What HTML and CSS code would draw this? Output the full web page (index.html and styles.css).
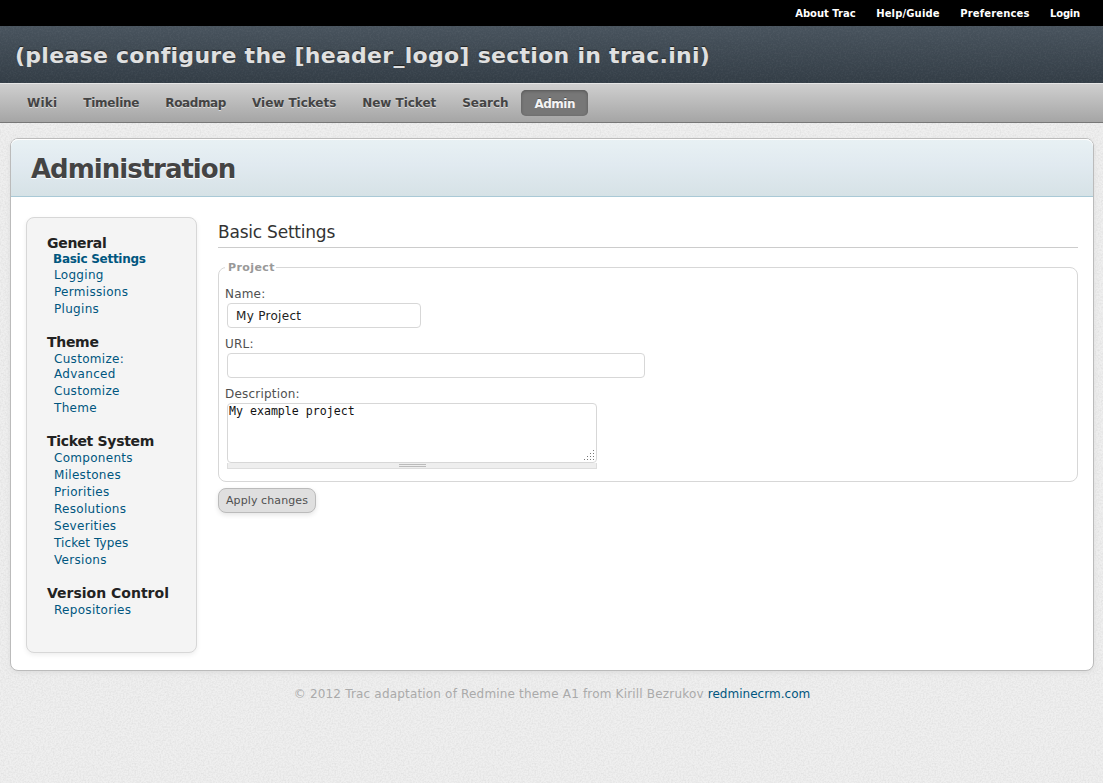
FILE: index.html
```html
<!DOCTYPE html>
<html lang="en">
<head>
<meta charset="utf-8">
<title>Administration: Basic Settings</title>
<link rel="stylesheet" href="styles.css">
</head>
<body>
<nav class="metanav">
  <a class="about">About Trac</a><a class="help">Help/Guide</a><a class="prefs">Preferences</a><a class="login">Login</a>
</nav>
<header class="banner"><span class="logo">(please configure the [header_logo] section in trac.ini)</span></header>
<nav class="mainnav">
  <a class="wiki">Wiki</a><a class="timeline">Timeline</a><a class="roadmap">Roadmap</a><a>View Tickets</a><a>New Ticket</a><a>Search</a><a class="active">Admin</a>
</nav>
<main class="main">
  <div class="title"><h1>Administration</h1></div>
  <div class="content">
    <aside class="tabs">
      <section><h3>General</h3><ul><li class="current">Basic Settings</li><li>Logging</li><li>Permissions</li><li>Plugins</li></ul></section>
      <section><h3>Theme</h3><ul><li>Customize:<br>Advanced</li><li>Customize</li><li>Theme</li></ul></section>
      <section><h3>Ticket System</h3><ul><li>Components</li><li>Milestones</li><li>Priorities</li><li>Resolutions</li><li>Severities</li><li class="types">Ticket Types</li><li>Versions</li></ul></section>
      <section><h3 class="vc">Version Control</h3><ul><li>Repositories</li></ul></section>
    </aside>
    <form class="panel">
      <h2>Basic Settings</h2>
      <fieldset>
        <legend>Project</legend>
        <label>Name:</label>
        <input class="name" type="text" value="My Project">
        <label>URL:</label>
        <input class="url" type="text">
        <label>Description:</label>
        <div class="area">
          <textarea>My example project</textarea>
          <svg class="resizer" width="10" height="10" viewBox="0 0 10 10"><path fill="#777" d="M9 0h1v1h-1zM6 3h1v1h-1zM9 3h1v1h-1zM3 6h1v1h-1zM6 6h1v1h-1zM9 6h1v1h-1zM0 9h1v1h-1zM3 9h1v1h-1zM6 9h1v1h-1zM9 9h1v1h-1z"/></svg>
        </div>
        <div class="grip"><i></i></div>
      </fieldset>
      <button type="button">Apply changes</button>
    </form>
  </div>
</main>
<footer class="footer">© 2012 Trac adaptation of Redmine theme A1 from Kirill Bezrukov <a>redminecrm.com</a></footer>
</body>
</html>
```
FILE: styles.css
```css
* { box-sizing: border-box; }
body {
  margin: 0;
  height: 783px;
  overflow: hidden;
  font: 12px/15px "DejaVu Sans", sans-serif;
  letter-spacing: 0.3px;
  color: #505050;
  background: #efefef url("data:image/svg+xml,%3Csvg xmlns='http://www.w3.org/2000/svg' width='200' height='200'%3E%3Cfilter id='n'%3E%3CfeTurbulence type='fractalNoise' baseFrequency='.6' numOctaves='2' stitchTiles='stitch'/%3E%3CfeColorMatrix values='0 0 0 0 0 0 0 0 0 0 0 0 0 0 0 .12 0 0 0 -.045'/%3E%3C/filter%3E%3Crect width='200' height='200' filter='url(%23n)'/%3E%3C/svg%3E");
}
.metanav {
  height: 26px;
  background: #000;
  color: #fff;
  display: flex;
  justify-content: flex-end;
  gap: 20.5px;
  padding-right: 23px;
  font-weight: bold;
  font-size: 10px;
  line-height: 27px;
  letter-spacing: 0;
}
.help, .prefs { letter-spacing: 0.15px; }
.login { letter-spacing: -0.2px; }
.banner {
  height: 57px;
  padding-left: 15px;
  background: url("data:image/svg+xml,%3Csvg xmlns='http://www.w3.org/2000/svg' width='200' height='200'%3E%3Cfilter id='n'%3E%3CfeTurbulence type='fractalNoise' baseFrequency='.6' numOctaves='2' stitchTiles='stitch'/%3E%3CfeColorMatrix values='0 0 0 0 1 0 0 0 0 1 0 0 0 0 1 .12 0 0 0 -.05'/%3E%3C/filter%3E%3Crect width='200' height='200' filter='url(%23n)'/%3E%3C/svg%3E"), linear-gradient(#48535d, #333d46);
}
.logo {
  font-size: 22px;
  font-weight: bold;
  line-height: 60px;
  letter-spacing: 0.28px;
  color: #e0e0e0;
  text-shadow: 0 -1px 1px #222;
  white-space: nowrap;
}
.mainnav {
  height: 40px;
  padding: 7px 14px 0;
  display: flex;
  background: linear-gradient(#cfcfcf, #a5a5a5);
  border-top: 1px solid #e6e6e6;
  border-bottom: 1px solid #777;
  font-weight: bold;
  letter-spacing: -0.04px;
  text-shadow: 0 1px 0 #ddd;
  color: #444;
}
.mainnav a { padding: 0 13px; line-height: 24px; height: 26px; }
.mainnav .wiki { letter-spacing: 0.2px; }
.mainnav .timeline { letter-spacing: -0.23px; }
.mainnav .roadmap { letter-spacing: -0.37px; }
.mainnav .active {
  margin-top: -1px;
  line-height: 28px;
  letter-spacing: -0.5px;
  border-radius: 5px;
  background: #777;
  box-shadow: inset 0 1px 3px #555;
  color: #f4f4f4;
  text-shadow: 0 -1px 0 #555;
}
.main {
  height: 533px;
  margin: 15px 9px 0 10px;
  background: #fff;
  border: 1px solid #bbb;
  border-radius: 8px;
  box-shadow: 0 2px 5px #ddd;
}
.title {
  height: 58px;
  padding-left: 20px;
  border-bottom: 1px solid #a9c9d6;
  border-radius: 7px 7px 0 0;
  background: linear-gradient(#e8f1f4, #e1eaf0 45%, #d6e2e6);
  box-shadow: inset 0 1px 0 #fff;
}
h1 {
  margin: 0;
  font-size: 26px;
  line-height: 60px;
  letter-spacing: -1px;
  color: #444;
  text-shadow: 0 1px 0 #fff;
}
.content { display: flex; gap: 21px; padding: 20px 15px 0; }
.tabs {
  width: 171px;
  height: 436px;
  padding: 17px 0 0 20px;
  background: #f4f4f4;
  border: 1px solid #d7d7d7;
  border-radius: 8px;
  box-shadow: 0 2px 5px #eee;
}
.tabs section { margin-bottom: 17px; }
.tabs section + section ul { padding-top: 1px; }
h3 {
  margin: 0;
  font-size: 14px;
  font-weight: bold;
  line-height: 17px;
  letter-spacing: -0.3px;
  color: #222;
}
.vc { letter-spacing: 0; }
ul { list-style: none; margin: 0; padding: 0 0 0 7px; color: #00567f; }
li { line-height: 15px; margin-bottom: 2px; }
.current { font-weight: bold; letter-spacing: -0.27px; margin: 0 0 1px -1px; }
.types { letter-spacing: 0.1px; }
.panel { flex: 1; }
h2 {
  margin: 0;
  height: 31px;
  border-bottom: 1px solid #ccc;
  font-size: 17px;
  font-weight: normal;
  line-height: 31px;
  letter-spacing: -0.22px;
  color: #333;
}
fieldset {
  margin: 12px 0 6px;
  padding: 10px 6px 12px;
  height: 222px;
  border: 1px solid #d7d7d7;
  border-radius: 8px;
}
legend {
  padding: 1px 1px 0 3px;
  font-size: 11px;
  font-weight: bold;
  line-height: 14px;
  letter-spacing: 0.4px;
  color: #999;
}
label { display: block; line-height: 18px; letter-spacing: 0.2px; }
input, .area {
  display: block;
  height: 25px;
  margin: 0 0 7px 2px;
  border: 1px solid #d7d7d7;
  border-radius: 4px;
  background: #fff;
}
input {
  padding: 0 8px;
  font: 12px "DejaVu Sans", sans-serif;
  letter-spacing: 0.3px;
  color: #222;
}
.name { width: 194px; }
.url { width: 418px; }
.area { position: relative; width: 370px; height: 60px; margin-bottom: 0; }
textarea {
  display: block;
  width: 100%;
  height: 100%;
  border: 0;
  padding: 0 1px;
  resize: none;
  background: none;
  font: 11.6px/14px "DejaVu Sans Mono", monospace;
  color: #111;
}
.resizer { position: absolute; right: 2px; bottom: 2px; }
.grip {
  width: 370px;
  height: 6px;
  margin-left: 2px;
  background: #eee;
  border: 1px solid #ddd;
  border-top: 0;
  display: flex;
  justify-content: center;
}
.grip i { width: 27px; height: 3px; margin-top: 1px; border: solid #bbb; border-width: 1px 0; }
button {
  display: block;
  width: 98px;
  height: 25px;
  padding: 0;
  border: 1px solid #bbb;
  border-radius: 8px;
  background: #dfdfdf;
  box-shadow: 0 2px 5px #e5e5e5;
  font: 11px "DejaVu Sans", sans-serif;
  letter-spacing: 0.1px;
  color: #505050;
}
.footer { margin-top: 16px; padding-left: 1px; text-align: center; color: #aaa; letter-spacing: 0.18px; }
.footer a { color: #00567f; letter-spacing: 0.03px; }
```
